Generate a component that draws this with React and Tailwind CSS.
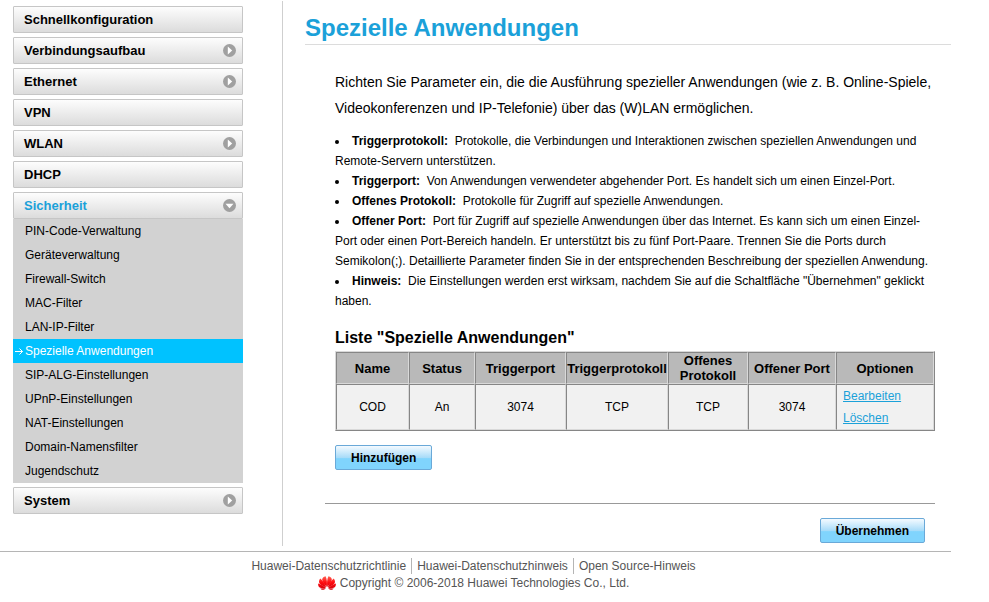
const menu = [
  { label: 'Schnellkonfiguration' },
  { label: 'Verbindungsaufbau', expandable: true },
  { label: 'Ethernet', expandable: true },
  { label: 'VPN' },
  { label: 'WLAN', expandable: true },
  { label: 'DHCP' },
  {
    label: 'Sicherheit',
    expandable: true,
    open: true,
    children: [
      'PIN-Code-Verwaltung',
      'Geräteverwaltung',
      'Firewall-Switch',
      'MAC-Filter',
      'LAN-IP-Filter',
      'Spezielle Anwendungen',
      'SIP-ALG-Einstellungen',
      'UPnP-Einstellungen',
      'NAT-Einstellungen',
      'Domain-Namensfilter',
      'Jugendschutz',
    ],
  },
  { label: 'System', expandable: true },
];

const activePage = 'Spezielle Anwendungen';

const hints = [
  ['Triggerprotokoll:', 'Protokolle, die Verbindungen und Interaktionen zwischen speziellen Anwendungen und Remote-Servern unterstützen.'],
  ['Triggerport:', 'Von Anwendungen verwendeter abgehender Port. Es handelt sich um einen Einzel-Port.'],
  ['Offenes Protokoll:', 'Protokolle für Zugriff auf spezielle Anwendungen.'],
  ['Offener Port:', 'Port für Zugriff auf spezielle Anwendungen über das Internet. Es kann sich um einen Einzel-Port oder einen Port-Bereich handeln. Er unterstützt bis zu fünf Port-Paare. Trennen Sie die Ports durch Semikolon(;). Detaillierte Parameter finden Sie in der entsprechenden Beschreibung der speziellen Anwendung.'],
  ['Hinweis:', 'Die Einstellungen werden erst wirksam, nachdem Sie auf die Schaltfläche "Übernehmen" geklickt haben.'],
];

const columns = [
  ['Name', 'w-[73px]'],
  ['Status', 'w-[66px]'],
  ['Triggerport', 'w-[91px]'],
  ['Triggerprotokoll', 'w-[102px]'],
  ['Offenes Protokoll', 'w-[80px]'],
  ['Offener Port', 'w-[88px]'],
  ['Optionen', 'w-[98px]'],
];

const applications = [['COD', 'An', '3074', 'TCP', 'TCP', '3074']];

const cell = 'border border-t-[#868686] border-l-[#868686] border-r-[#d9d9d9] border-b-[#d9d9d9] p-0';

function ArrowBadge({ open }) {
  return (
    <svg className="size-[13px]" viewBox="0 0 13 13" aria-hidden="true">
      <circle cx="6.5" cy="6.5" r="6.5" fill="#a0a0a0" />
      <path d={open ? 'M2.500 4.800h8L6.500 9.200z' : 'M4.800 2.500v8L9.200 6.500z'} fill="#fff" />
    </svg>
  );
}

function Logo() {
  return (
    <svg className="h-[14px] w-[18px]" viewBox="0 0 18 14" aria-hidden="true">
      <defs>
        <linearGradient id="petal" gradientUnits="userSpaceOnUse" x1="0" y1="0" x2="0" y2="14">
          <stop offset="0" stopColor="#ff6a5c" />
          <stop offset="0.45" stopColor="#ff0c10" />
          <stop offset="1" stopColor="#d0000c" />
        </linearGradient>
      </defs>
      <g fill="url(#petal)">
        <path d="M8.700 11C9.200 7 9 3 7.600.2 5.400.5 4.200 2 4.200 3.800 4.500 6.500 6.800 9 8.700 11z" />
        <path d="M9.300 11C8.800 7 9 3 10.400.2 12.600.5 13.800 2 13.800 3.800 13.500 6.500 11.200 9 9.300 11z" />
        <path d="M8.200 11.400C7.200 8.200 4.700 4.500 2.300 2.400.9 3.800.6 5.800 1.500 7.300 2.800 9.300 5.800 10.700 8.200 11.400z" />
        <path d="M9.800 11.400C10.800 8.200 13.300 4.500 15.700 2.400 17.100 3.800 17.400 5.800 16.500 7.300 15.200 9.300 12.200 10.700 9.800 11.400z" />
        <path d="M8 11.900C5.500 9.900 2.500 8 .1 7.400-.1 9.300.7 11.100 2.200 11.800 3.700 12.400 6.200 12.200 8 11.900z" />
        <path d="M10 11.900C12.500 9.900 15.500 8 17.900 7.400 18.100 9.300 17.300 11.100 15.800 11.800 14.300 12.400 11.800 12.200 10 11.900z" />
        <path d="M7.800 12.200 2.300 12.400C3.500 14.200 5.800 14.500 7.800 12.200z" />
        <path d="M10.200 12.200 15.700 12.400C14.500 14.200 12.200 14.500 10.200 12.200z" />
      </g>
    </svg>
  );
}

function Button({ children }) {
  return (
    <button
      type="button"
      className="h-[25px] rounded-[2px] border border-[#6aa9d8] bg-linear-to-b from-[#f4faff] from-0% via-[#a8dcf9] via-50% to-[#80d4fd] to-55% px-[15px] text-xs font-bold"
    >
      {children}
    </button>
  );
}

function MenuEntry({ item }) {
  return (
    <li>
      <a
        href="#"
        className={`flex h-[27px] items-center justify-between rounded-[1px] border border-[#c6c6c6] bg-linear-to-b from-[#fdfdfd] to-[#dcdcdc] pr-[6px] pl-[10px] text-[13px] font-bold ${item.open ? 'text-[#1ba1d9]' : 'text-black'}`}
      >
        {item.label}
        {item.expandable && <ArrowBadge open={item.open} />}
      </a>
      {item.children && (
        <ul className="bg-[#d2d2d2] text-xs">
          {item.children.map((name) => (
            <li key={name}>
              <a
                href="#"
                className={`flex h-6 items-center ${name === activePage ? 'bg-[#00c2ff] pl-[2px] text-white' : 'pl-3 text-black'}`}
              >
                {name === activePage && (
                  <svg className="mr-[2px] h-[7px] w-2" viewBox="0 0 8 7" fill="none" stroke="#fff" aria-hidden="true">
                    <path d="M0 3.500h7.500M4.500.500l3 3-3 3" />
                  </svg>
                )}
                {name}
              </a>
            </li>
          ))}
        </ul>
      )}
    </li>
  );
}

export default function App() {
  return (
    <div className="bg-white pr-[38px] font-['Liberation_Sans',Arial,sans-serif] text-xs text-black">
      <div className="flex">
        <nav className="mt-px w-[283px] shrink-0 border-r border-[#cfcfcf] pt-[5px] pr-[39px] pl-[13px]">
          <ul className="flex flex-col gap-1">
            {menu.map((item) => (
              <MenuEntry key={item.label} item={item} />
            ))}
          </ul>
        </nav>

        <main className="min-w-0 flex-1 pb-[3px] pl-[22px]">
          <h1 className="border-b border-[#dcdcdc] pt-3 text-2xl leading-8 font-bold text-[#1ba1d9]">
            Spezielle Anwendungen
          </h1>

          <div className="pr-4 pl-[30px]">
            <p className="pt-6 text-sm leading-[26px]">
              Richten Sie Parameter ein, die die Ausführung spezieller Anwendungen (wie z. B. Online-Spiele,
              Videokonferenzen und IP-Telefonie) über das (W)LAN ermöglichen.
            </p>

            <ul className="list-inside list-disc pt-[10px] leading-5">
              {hints.map(([term, text]) => (
                <li key={term}>
                  <b>{term}</b>&nbsp; {text}
                </li>
              ))}
            </ul>

            <h2 className="pt-4 pb-[2px] text-base leading-[22px] font-bold">Liste "Spezielle Anwendungen"</h2>
            <table className="w-full table-fixed border-separate border-spacing-0 border border-t-[#d9d9d9] border-r-[#868686] border-b-[#868686] border-l-[#d9d9d9] text-center">
              <thead>
                <tr className="h-8 bg-[#b9b9b9] text-[13px] leading-[15px]">
                  {columns.map(([name, width]) => (
                    <th key={name} className={`${cell} ${width}`}>
                      {name}
                    </th>
                  ))}
                </tr>
              </thead>
              <tbody>
                {applications.map((row) => (
                  <tr key={row[0]} className="h-[46px] bg-[#f1f1f1]">
                    {row.map((value, i) => (
                      <td key={i} className={cell}>
                        {value}
                      </td>
                    ))}
                    <td className={`${cell} text-left`}>
                      <div className="flex flex-col items-start pl-[6px] leading-[22px] text-[#1ba1d9] underline">
                        <a href="#">Bearbeiten</a>
                        <a href="#">Löschen</a>
                      </div>
                    </td>
                  </tr>
                ))}
              </tbody>
            </table>

            <div className="flex pt-[14px]">
              <Button>Hinzufügen</Button>
            </div>
          </div>

          <div className="mt-[33px] mr-4 ml-5 flex justify-end border-t border-[#999] pt-[14px] pr-[10px]">
            <Button>Übernehmen</Button>
          </div>
        </main>
      </div>

      <footer className="mt-[5px] flex flex-col items-center border-t border-[#b5b5b5] pt-[6px] pr-1 text-[#555]">
        <div className="flex leading-4">
          <a href="#" className="border-r border-[#b5b5b5] pr-[5px]">Huawei-Datenschutzrichtlinie</a>
          <a href="#" className="border-r border-[#b5b5b5] px-[5px]">Huawei-Datenschutzhinweis</a>
          <a href="#" className="pl-[5px]">Open Source-Hinweis</a>
        </div>
        <p className="flex items-center gap-1 leading-[18px]">
          <Logo />
          Copyright © 2006-2018 Huawei Technologies Co., Ltd.
        </p>
      </footer>
    </div>
  );
}
